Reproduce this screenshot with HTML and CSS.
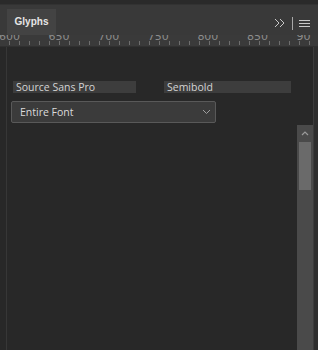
FILE: index.html
```html
<!DOCTYPE html>
<html>
<head>
    <title>Glyphs</title>
    <link rel="stylesheet" href="styles.css">
</head>
<body>
    <div class="panel">
        <div class="topbar"></div>
        <div class="header">
            <div class="tab">Glyphs</div>
            <div class="tools">
                <svg width="12" height="10" viewBox="0 0 12 10"><path d="M1 1l4 4-4 4M6 1l4 4-4 4" fill="none" stroke="#c8c8c8" stroke-width="1"/></svg>
                <span class="sep"></span>
                <svg width="11" height="9" viewBox="0 0 11 9"><path d="M0 1.5h11M0 4.5h11M0 7.5h11" stroke="#c8c8c8" stroke-width="1"/></svg>
            </div>
        </div>
        <div class="ruler">
            <div class="ticks"></div>
            <span>600</span><span>650</span><span>700</span><span>750</span><span>800</span><span>850</span><span>90</span>
        </div>
        <div class="body">
            <div class="content">
                <div class="fields">
                    <div class="field family">Source Sans Pro</div>
                    <div class="field style">Semibold</div>
                </div>
                <div class="select">
                    <span>Entire Font</span>
                    <svg width="9" height="6" viewBox="0 0 9 6"><path d="M1 1l3.5 3.5L8 1" fill="none" stroke="#a0a0a0" stroke-width="1"/></svg>
                </div>
            </div>
            <div class="scrollbar">
                <div class="arrow">
                    <svg width="8" height="5" viewBox="0 0 8 5"><path d="M1 4l3-3 3 3" fill="none" stroke="#9a9a9a" stroke-width="1.2"/></svg>
                </div>
                <div class="thumb"></div>
            </div>
            <div class="edge"></div>
        </div>
    </div>
</body>
</html>
```
FILE: styles.css
```css
body {
    margin: 0;
    background-color: #282828;
    font-family: "Open Sans", "Liberation Sans", sans-serif;
    width: 318px;
    height: 350px;
    overflow: hidden;
}
.panel {
    display: flex;
    flex-direction: column;
    height: 350px;
}
.topbar {
    height: 4px;
    background-color: #2a2a2a;
    border-bottom: 1px solid #323232;
}
.header {
    height: 30px;
    background-color: #393939;
    display: flex;
    align-items: flex-end;
    padding-left: 7px;
    padding-right: 8px;
}
.tab {
    height: 26px;
    width: 49px;
    background-color: #434343;
    color: #e6e6e6;
    font-family: "Liberation Sans", Arial, sans-serif;
    font-size: 10px;
    font-weight: bold;
    display: flex;
    align-items: center;
    justify-content: center;
    box-sizing: border-box;
    padding-bottom: 1px;
}
.tools {
    margin-left: auto;
    align-self: center;
    display: flex;
    align-items: center;
    gap: 6px;
    padding-top: 6px;
}
.sep {
    width: 1px;
    height: 13px;
    background-color: #a8a8a8;
}
.ruler {
    position: relative;
    height: 11px;
    background-color: #3a3a3a;
    display: flex;
    overflow: hidden;
    border-bottom: 1px solid #303030;
    padding-left: 0;
}
.ruler span {
    width: 49.6px;
    flex-shrink: 0;
    color: #8c8c8c;
    font-family: "DejaVu Sans", sans-serif;
    font-size: 11px;
    line-height: 11px;
    margin-top: -4px;
    margin-left: -1px;
    margin-right: 1px;
}
.ticks {
    position: absolute;
    left: 0;
    right: 0;
    bottom: 1px;
    height: 4px;
    background-image: repeating-linear-gradient(90deg, transparent 0, transparent 9px, #6e6e6e 9px, #6e6e6e 10px);
}
.body {
    flex: 1;
    display: flex;
}
.content {
    flex: 1;
    border-left: 1px solid #373737;
    margin-left: 6px;
    padding-top: 34px;
}
.fields {
    display: flex;
    gap: 28px;
    padding-left: 6px;
}
.field {
    height: 12px;
    background-color: #3d3d3d;
    color: #d4d4d4;
    font-size: 10.5px;
    line-height: 12px;
    padding-left: 3px;
}
.family {
    width: 120px;
}
.style {
    width: 124px;
}
.select {
    margin-top: 8px;
    margin-left: 4px;
    border: 1px solid #595959;
    border-radius: 2px;
    background-color: #3b3b3b;
    display: flex;
    align-items: center;
    justify-content: space-between;
    padding: 0 4px 0 8px;
    box-sizing: border-box;
    width: 205px;
    height: 22px;
    color: #dadada;
    font-size: 10.5px;
}
.scrollbar {
    width: 16px;
    margin-top: 78px;
    background-color: #4a4a4a;
    display: flex;
    flex-direction: column;
    align-items: center;
}
.arrow {
    height: 17px;
    display: flex;
    align-items: center;
}
.thumb {
    width: 12px;
    height: 48px;
    background-color: #6a6a6a;
}
.edge {
    width: 5px;
    background-color: #2e2e2e;
    border-left: 1px solid #3c3c3c;
    box-sizing: border-box;
}
```
